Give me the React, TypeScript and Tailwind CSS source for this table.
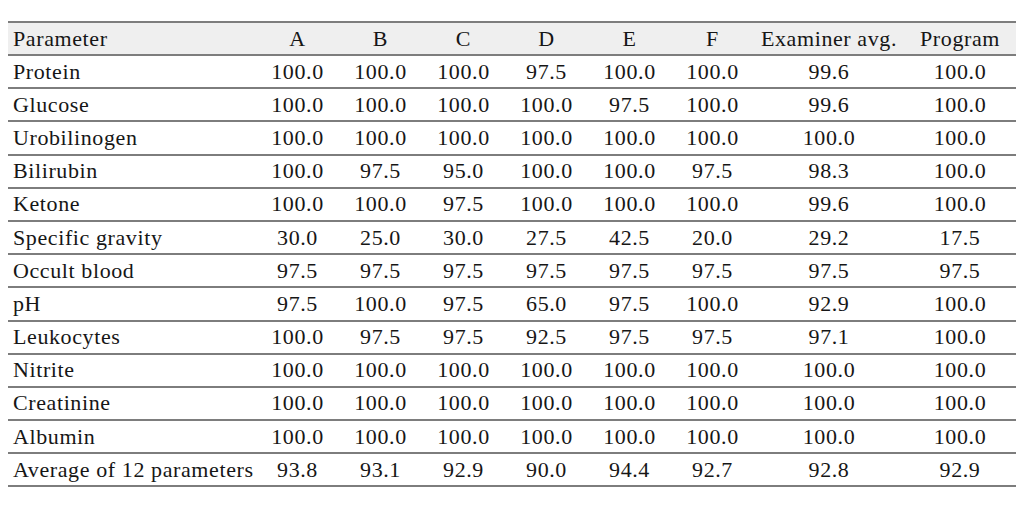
const columns = ["A", "B", "C", "D", "E", "F", "Examiner avg.", "Program"]

const rows: [string, string[]][] = [
  ["Protein", ["100.0", "100.0", "100.0", "97.5", "100.0", "100.0", "99.6", "100.0"]],
  ["Glucose", ["100.0", "100.0", "100.0", "100.0", "97.5", "100.0", "99.6", "100.0"]],
  ["Urobilinogen", ["100.0", "100.0", "100.0", "100.0", "100.0", "100.0", "100.0", "100.0"]],
  ["Bilirubin", ["100.0", "97.5", "95.0", "100.0", "100.0", "97.5", "98.3", "100.0"]],
  ["Ketone", ["100.0", "100.0", "97.5", "100.0", "100.0", "100.0", "99.6", "100.0"]],
  ["Specific gravity", ["30.0", "25.0", "30.0", "27.5", "42.5", "20.0", "29.2", "17.5"]],
  ["Occult blood", ["97.5", "97.5", "97.5", "97.5", "97.5", "97.5", "97.5", "97.5"]],
  ["pH", ["97.5", "100.0", "97.5", "65.0", "97.5", "100.0", "92.9", "100.0"]],
  ["Leukocytes", ["100.0", "97.5", "97.5", "92.5", "97.5", "97.5", "97.1", "100.0"]],
  ["Nitrite", ["100.0", "100.0", "100.0", "100.0", "100.0", "100.0", "100.0", "100.0"]],
  ["Creatinine", ["100.0", "100.0", "100.0", "100.0", "100.0", "100.0", "100.0", "100.0"]],
  ["Albumin", ["100.0", "100.0", "100.0", "100.0", "100.0", "100.0", "100.0", "100.0"]],
  ["Average of 12 parameters", ["93.8", "93.1", "92.9", "90.0", "94.4", "92.7", "92.8", "92.9"]],
]

const grid = "grid grid-cols-[248px_83px_83px_83px_83px_83px_83px_150px_1fr] items-center"

export default function App() {
  return (
    <div className="w-[1024px] h-[509px] bg-white pt-[21px] px-[8px] text-[#161616] text-[22px] leading-none tracking-[0.6px] font-['Liberation_Serif','Times_New_Roman',serif]">
      <div className="w-[1008px]">
        {/* Header */}
        <div className={`${grid} h-[35px] bg-[#efefef] border-y-2 border-[#7d7d7d]`}>
          <div className="pl-[5px]">Parameter</div>
          {columns.map((c) => (
            <div key={c} className="text-center">
              {c}
            </div>
          ))}
        </div>

        {/* Body */}
        {rows.map(([name, values]) => (
          <div key={name} className={`${grid} h-[33.2px] border-b-2 border-[#7d7d7d]`}>
            <div className="pl-[5px] whitespace-nowrap">{name}</div>
            {values.map((v, i) => (
              <div key={i} className="text-center">
                {v}
              </div>
            ))}
          </div>
        ))}
      </div>
    </div>
  )
}
